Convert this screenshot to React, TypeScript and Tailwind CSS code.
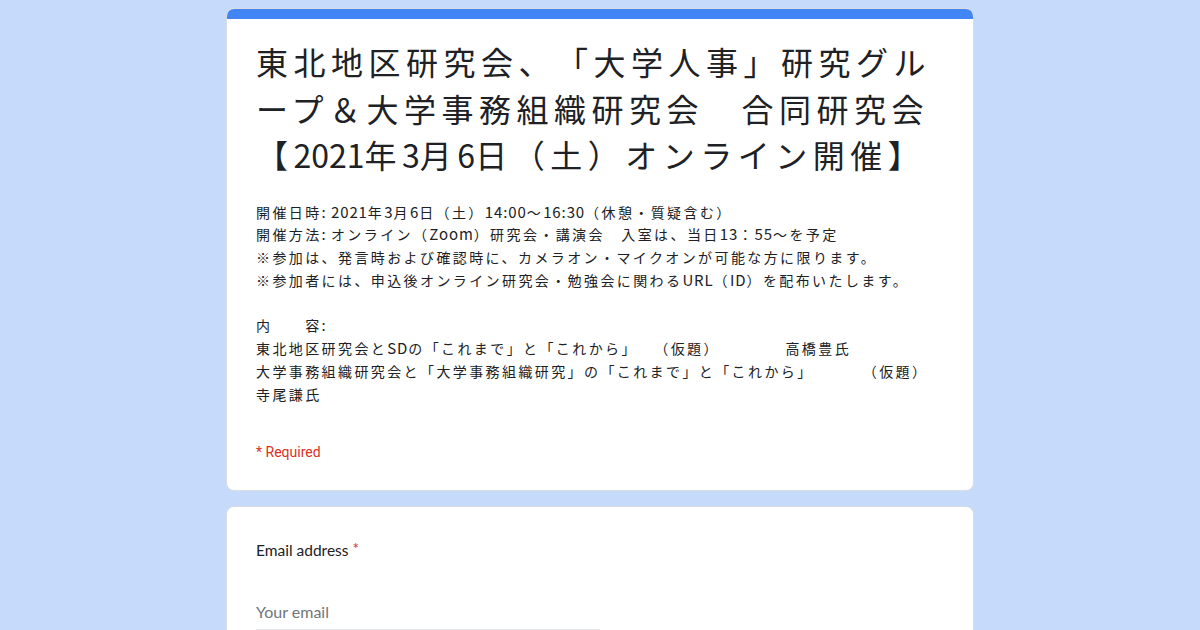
import React from "react";

const jp = { fontFamily: '"Noto Sans CJK JP", "Noto Sans", sans-serif' };

function Title({ s }: { s: string }) {
  const parts = s.split(/([\x20-\x7E]+)/);
  return (
    <>
      {parts.map((p, i) =>
        /^[\x20-\x7E]+$/.test(p) ? (
          <span key={i} className="tracking-normal">{p}</span>
        ) : (
          <span key={i}>{p}</span>
        )
      )}
    </>
  );
}

function Line({ s }: { s: string }) {
  const parts = s.split(/([\x20-\x7E]+)/);
  return (
    <div>
      {parts.map((p, i) =>
        /^[\x20-\x7E]+$/.test(p) ? (
          <span key={i} className="text-[15px] tracking-[0.9px]">{p}</span>
        ) : (
          <span key={i}>{p}</span>
        )
      )}
    </div>
  );
}

export default function App() {
  return (
    <div className="w-[1200px] h-[630px] overflow-hidden bg-[#c6dafc] [text-spacing-trim:space-all]" style={jp}>
      <div className="w-[748px] mx-auto pt-[8px] flex flex-col gap-[15px]">
        <div className="rounded-[8px] bg-white border border-[#dadce0] overflow-hidden">
          <div className="h-[10px] bg-[#4285f4]" />
          <div className="px-[29px] pt-[19px] pb-[28px]">
            <h1 className="text-[32px] leading-[46.5px] tracking-[5.5px] text-[#202124] font-normal">
              <Title s="東北地区研究会、「大学人事」研究グループ＆大学事務組織研究会　合同研究会【2021年3月6日（土）オンライン開催】" />
            </h1>
            <div className="mt-[23px] text-[14px] leading-[22.8px] tracking-[2.4px] text-[#202124] whitespace-pre">
              <Line s="開催日時: 2021年3月6日（土）14:00〜16:30（休憩・質疑含む）" />
              <Line s="開催方法: オンライン（Zoom）研究会・講演会　入室は、当日13：55〜を予定" />
              <Line s="※参加は、発言時および確認時に、カメラオン・マイクオンが可能な方に限ります。" />
              <Line s="※参加者には、申込後オンライン研究会・勉強会に関わるURL（ID）を配布いたします。" />
              <div>&nbsp;</div>
              <Line s="内　　容:" />
              <Line s="東北地区研究会とSDの「これまで」と「これから」　（仮題）　　　　高橋豊氏" />
              <Line s="大学事務組織研究会と「大学事務組織研究」の「これまで」と「これから」　　　（仮題）" />
              <Line s="寺尾謙氏" />
            </div>
            <div className="mt-[36px] text-[14px] leading-[20px] text-[#d93025]" style={{ fontFamily: "Roboto, sans-serif" }}>
              * Required
            </div>
          </div>
        </div>
        <div className="rounded-[8px] bg-white border border-[#dadce0] h-[200px] px-[29px] pt-[31px]">
          <div className="text-[15.5px] leading-[24px] text-[#202124]" style={{ fontFamily: "Lato, sans-serif" }}>
            Email address <span className="text-[#d93025] relative top-[-2px]">*</span>
          </div>
          <div className="mt-[38px] w-[344px] text-[16px] leading-[24px] text-[#70757a] border-b border-[#e8eaed] pb-[5px]" style={{ fontFamily: "Lato, sans-serif" }}>
            Your email
          </div>
        </div>
      </div>
    </div>
  );
}
